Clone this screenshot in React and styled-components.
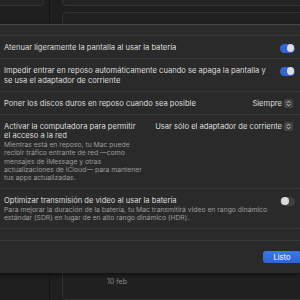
import React from "react";
import styled, { createGlobalStyle } from "styled-components";

const Global = createGlobalStyle`
  html, body { margin: 0; padding: 0; background: #1d1d1d; }
  body { font-family: Inter, "Noto Sans", sans-serif; -webkit-font-smoothing: antialiased; }
  * { box-sizing: border-box; }
`;

const Screen = styled.div`
  position: relative;
  width: 300px;
  height: 300px;
  overflow: hidden;
  background: #1d1d1d;
`;

/* ---------- backdrop (window behind the sheet) ---------- */
const Backdrop = styled.div`
  display: flex;
  height: 300px;
`;

const Sidebar = styled.div`
  width: 50px;
  flex: none;
  padding-right: 5px;
  border-right: 1px solid #141414;
  background: #1f1f1f;
`;

const SideCard = styled.div`
  height: 30px;
  margin-top: -24px;
  border: 1px solid #353535;
  border-radius: 4px;
  background: #232323;
  margin-left: -10px;
`;

const Content = styled.div`
  flex: 1;
  display: flex;
  flex-direction: column;
  gap: 6px;
  padding-left: 12px;
  background: #1e1e1e;
`;

const FieldBox = styled.div`
  height: 22px;
  margin-top: -11px;
  margin-right: -10px;
  border: 1px solid #343434;
  border-radius: 4px;
  background: #242424;
  padding: 0 0 0 6px;
  display: flex;
  align-items: center;
  font-size: 7.6px;
  color: #8e8e8e;
`;

const ChartBox = styled.div`
  height: 300px;
  margin-right: -10px;
  border: 1px solid #333333;
  border-radius: 4px;
  background: #202020;
  padding-top: 251px;
`;

const AxisRow = styled.div`
  display: grid;
  grid-template-columns: repeat(7, 36px);
  padding-left: 8px;
  font-size: 6.8px;
  line-height: 9px;
  color: #8a8a8a;
`;

const DateRow = styled(AxisRow)`
  margin-top: 4px;
  font-size: 7px;
`;

/* ---------- sheet ---------- */
const Sheet = styled.div`
  position: absolute;
  top: 24px;
  left: 0;
  right: 0;
  height: 249px;
  background: #2a2a2a;
  border-top: 1px solid #474747;
  display: flex;
  flex-direction: column;
  box-shadow: 0 2px 4px rgba(0, 0, 0, 0.5);
`;

const TopBand = styled.div`
  height: 10px;
  flex: none;
  background: #2b2b2b;
`;

const List = styled.div`
  display: flex;
  flex-direction: column;
`;

const Row = styled.div`
  display: flex;
  align-items: flex-start;
  justify-content: space-between;
  gap: 8px;
  padding: 7px 5px 5.5px 4px;
  border-top: 1px solid #3a3a3a;
`;

const Label = styled.div`
  flex: ${(p) => (p.$narrow ? "none" : "1")};
  width: ${(p) => (p.$narrow ? "143px" : "auto")};
  min-width: 0;
`;

const Title = styled.div`
  max-width: ${(p) => p.$max || "none"};
  font-size: 7.6px;
  line-height: 9.6px;
  color: #dedede;
`;

const Desc = styled.div`
  font-size: 6.8px;
  line-height: 8.3px;
  color: #9c9c9c;
`;

const Toggle = styled.div`
  flex: none;
  width: 15px;
  height: 9px;
  margin-top: 0.5px;
  border-radius: 5px;
  background: ${(p) => (p.$on ? "#2f66d8" : "#404040")};
  display: flex;
  align-items: center;
  justify-content: ${(p) => (p.$on ? "flex-end" : "flex-start")};
  padding: 0 1px;
`;

const Knob = styled.div`
  width: 7.5px;
  height: 7.5px;
  border-radius: 50%;
  background: #dcdcdc;
  box-shadow: 0 0 1px rgba(0, 0, 0, 0.4);
`;

const Select = styled.div`
  flex: none;
  display: flex;
  align-items: center;
  gap: 2px;
  font-size: 7.6px;
  line-height: 9.6px;
  color: #dedede;
  margin-right: 2px;
`;

const Stepper = styled.div`
  width: 9px;
  height: 9px;
  border-radius: 2px;
  background: #454545;
  display: flex;
  align-items: center;
  justify-content: center;
`;

const BottomBand = styled.div`
  height: 13px;
  flex: none;
  border-top: 1px solid #3a3a3a;
  border-bottom: 1px solid #3a3a3a;
`;

const Footer = styled.div`
  flex: 1;
  display: flex;
  align-items: center;
  justify-content: flex-end;
  padding-top: 1px;
`;

const Button = styled.div`
  width: 38px;
  height: 12px;
  margin-right: -1px;
  border-radius: 3px;
  background: linear-gradient(#3c78e6, #2c66d6);
  color: #ffffff;
  font-size: 7.6px;
  display: flex;
  align-items: center;
  justify-content: center;
`;

const StepperIcon = () => (
  <svg width="5" height="7" viewBox="0 0 5 7" fill="none" stroke="#d8d8d8" strokeWidth="0.9" strokeLinecap="round" strokeLinejoin="round">
    <path d="M1 2.6 L2.5 1.1 L4 2.6" />
    <path d="M1 4.4 L2.5 5.9 L4 4.4" />
  </svg>
);

const Switch = ({ on }) => (
  <Toggle $on={on}>
    <Knob />
  </Toggle>
);

const Popup = ({ children }) => (
  <Select>
    <span>{children}</span>
    <Stepper>
      <StepperIcon />
    </Stepper>
  </Select>
);

export default function App() {
  return (
    <Screen>
      <Global />
      <Backdrop>
        <Sidebar>
          <SideCard />
        </Sidebar>
        <Content>
          <FieldBox>Ahorrar batería</FieldBox>
          <ChartBox>
            <AxisRow>
              <span>0</span>
              <span>12 a.m.</span>
              <span>6</span>
              <span>6</span>
              <span>6</span>
              <span>12 p.m.</span>
              <span>6</span>
            </AxisRow>
            <DateRow>
              <span />
              <span>10 feb</span>
            </DateRow>
          </ChartBox>
        </Content>
      </Backdrop>

      <Sheet>
        <TopBand />
        <List>
          <Row>
            <Label>
              <Title>Atenuar ligeramente la pantalla al usar la batería</Title>
            </Label>
            <Switch on />
          </Row>
          <Row>
            <Label>
              <Title>
                Impedir entrar en reposo automáticamente cuando se apaga la pantalla y se usa el adaptador de corriente
              </Title>
            </Label>
            <Switch on />
          </Row>
          <Row>
            <Label>
              <Title>Poner los discos duros en reposo cuando sea posible</Title>
            </Label>
            <Popup>Siempre</Popup>
          </Row>
          <Row>
            <Label $narrow>
              <Title $max="136px">Activar la computadora para permitir el acceso a la red</Title>
              <Desc>
                Mientras está en reposo, tu Mac puede recibir tráfico entrante de red —como mensajes de iMessage y otras
                actualizaciones de iCloud— para mantener tus apps actualizadas.
              </Desc>
            </Label>
            <Popup>Usar sólo el adaptador de corriente</Popup>
          </Row>
          <Row>
            <Label>
              <Title>Optimizar transmisión de video al usar la batería</Title>
              <Desc>
                Para mejorar la duración de la batería, tu Mac transmitirá video en rango dinámico estándar (SDR) en
                lugar de en alto rango dinámico (HDR).
              </Desc>
            </Label>
            <Switch />
          </Row>
        </List>
        <BottomBand />
        <Footer>
          <Button>Listo</Button>
        </Footer>
      </Sheet>
    </Screen>
  );
}
